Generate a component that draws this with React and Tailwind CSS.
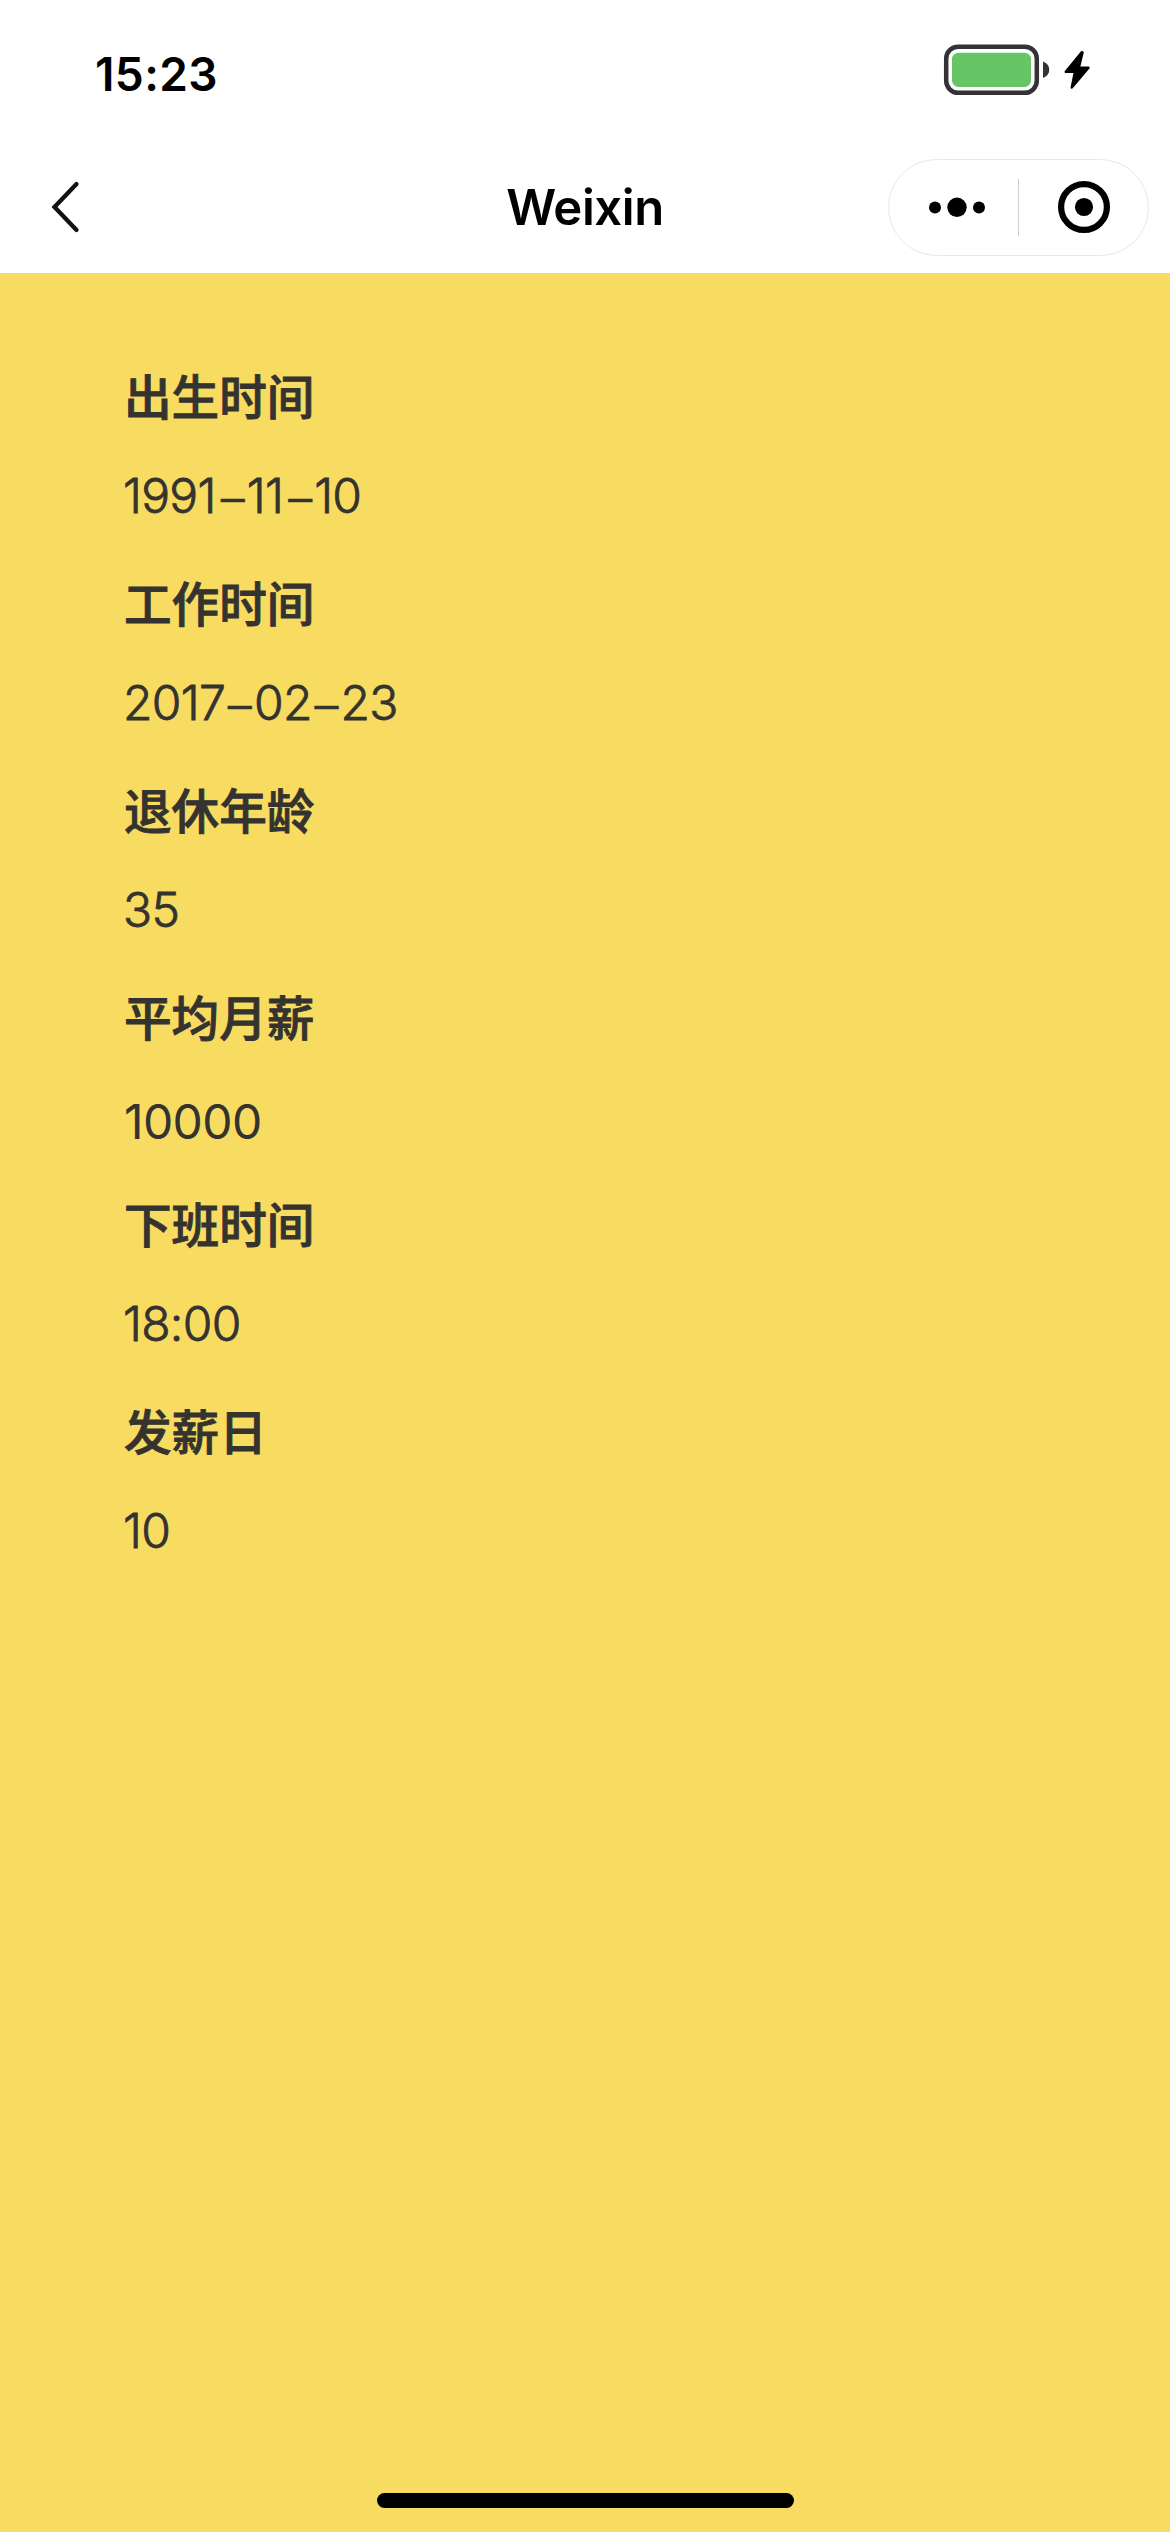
const fields = [
  { label: "出生时间", value: "1991–11–10", tone: "thin", dash: "ml-[5px] mr-[2.7px]" },
  { label: "工作时间", value: "2017–02–23", tone: "thin", dash: "mx-[2.8px]" },
  { label: "退休年龄", value: "35", tone: "thin" },
  { label: "平均月薪", value: "10000", tone: "input" },
  { label: "下班时间", value: "18:00", tone: "thin" },
  { label: "发薪日", value: "10", tone: "thin" },
];

const tones = {
  thin: "-ml-px font-light tracking-[-0.7px] [-webkit-text-stroke:0.8px_#353330]",
  input: "font-normal tracking-[-0.6px] pt-[5px]",
};

function Value({ text, dash }) {
  return text.split(/(–)/).map((part, i) =>
    part === "–" ? (
      <span key={i} className={`align-[-1.5px] [-webkit-text-stroke:0.4px_#353330] ${dash}`}>
        {part}
      </span>
    ) : (
      part
    )
  );
}

function StatusBar() {
  return (
    <div className="flex h-[141px] items-start justify-between pl-[95px] pr-[78px]">
      <div className="mt-[46px] text-[46px] leading-[56px] font-semibold tracking-[0.4px] text-black">15:23</div>
      <svg className="mt-[40px] h-[60px] w-[152px]" viewBox="940 40 152 60" fill="none">
        <rect x="946.2" y="46.7" width="90.6" height="46.1" rx="12" stroke="#333337" strokeWidth="4.5" />
        <rect x="952" y="52.7" width="79" height="34.3" rx="6.5" fill="#65c567" />
        <path d="M1043 61.5C1047 63 1049.2 66 1049.2 69.8C1049.2 73.6 1047 76.5 1043 78Z" fill="#333337" />
        <path
          d="M1081.8 52.3L1065.8 71.8H1075L1071.8 87.5L1088.5 67.8H1078.8L1082.5 52.5Z"
          fill="#000"
          stroke="#000"
          strokeWidth="2.5"
          strokeLinejoin="round"
        />
      </svg>
    </div>
  );
}

function NavBar() {
  return (
    <div className="grid h-[132px] grid-cols-3 items-center">
      <svg className="ml-[44px] h-[60px] w-[40px]" viewBox="44 177 40 60" fill="none">
        <path d="M76.5 184L54.5 207L76.5 230" stroke="#111" strokeWidth="4.3" strokeLinecap="round" />
      </svg>
      <div className="mt-[2px] text-center text-[49px] leading-[60px] font-semibold tracking-[-0.4px] text-black">Weixin</div>
      <div className="mr-[21px] flex h-[97px] w-[261px] items-center justify-self-end rounded-full border border-[#e8e8e8]">
        <svg className="h-[60px] w-[129px]" viewBox="889 177 129 60">
          <circle cx="935" cy="207.5" r="6" />
          <circle cx="957" cy="207.3" r="9.7" />
          <circle cx="979" cy="207.5" r="6" />
        </svg>
        <div className="h-[57px] w-px bg-[#cfcfcf]" />
        <svg className="h-[60px] w-[129px]" viewBox="1019 177 129 60">
          <circle cx="1084" cy="207" r="22.9" fill="none" stroke="#000" strokeWidth="6.2" />
          <circle cx="1084" cy="207" r="9.1" />
        </svg>
      </div>
    </div>
  );
}

export default function App() {
  return (
    <div className="flex h-[2532px] w-[1170px] flex-col bg-white font-['Inter','Noto_Sans_CJK_SC',sans-serif]">
      <StatusBar />
      <NavBar />
      <main className="flex flex-1 flex-col bg-[#f8dc62] pt-[75px] pl-[124px] text-[#353330]">
        {fields.map((f) => (
          <section key={f.label} className="flex h-[207px] flex-col">
            <h2 className="h-[98px] text-[47.6px] leading-[100px] font-medium [-webkit-text-stroke:0.9px_#353330]">
              {f.label}
            </h2>
            <p className={`text-[48px] leading-[100px] whitespace-nowrap ${tones[f.tone]}`}>
              <Value text={f.value} dash={f.dash} />
            </p>
          </section>
        ))}
        <div className="mt-auto mb-[24px] ml-[253px] h-[15px] w-[417px] rounded-full bg-black" />
      </main>
    </div>
  );
}
